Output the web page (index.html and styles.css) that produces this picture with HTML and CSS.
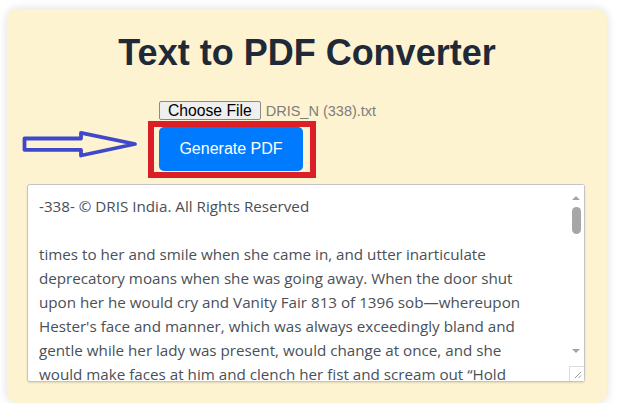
FILE: index.html
```html
<!DOCTYPE html>
<html lang="en">
<head>
<meta charset="utf-8">
<title>Text to PDF Converter</title>
<link rel="stylesheet" href="styles.css">
</head>
<body>
<div class="card">
  <h1 class="title">Text to PDF Converter</h1>
  <form class="form">
    <div class="file-row">
      <button type="button" class="file-btn">Choose File</button>
      <span class="file-name">DRIS_N (338).txt</span>
    </div>
    <button type="button" class="generate-btn">Generate PDF</button>
  </form>
  <div class="text-wrap">
    <textarea class="text-area" readonly>-338- © DRIS India. All Rights Reserved

times to her and smile when she came in, and utter inarticulate
deprecatory moans when she was going away. When the door shut
upon her he would cry and Vanity Fair 813 of 1396 sob—whereupon
Hester's face and manner, which was always exceedingly bland and
gentle while her lady was present, would change at once, and she
would make faces at him and clench her fist and scream out “Hold
your tongue,” at her.</textarea>
    <div class="scrollbar">
      <span class="sb-up"></span>
      <span class="sb-thumb"></span>
      <span class="sb-down"></span>
    </div>
    <div class="resizer">
      <svg width="15" height="15" viewBox="0 0 15 15"><path d="M12 6 L6 12 M12 9.5 L9.5 12" stroke="#9a9a9a" stroke-width="1" fill="none"/></svg>
    </div>
  </div>
  <div class="highlight-box"></div>
  <svg class="pointer-arrow" width="120" height="32" viewBox="0 0 120 32">
    <polygon points="2.5,8.5 59,8.5 59,2.8 113,14 59,25.5 59,19.8 2.5,19.8" fill="none" stroke="#3f48cc" stroke-width="3.8" stroke-linejoin="round"/>
  </svg>
</div>
</body>
</html>
```
FILE: styles.css
```css
* { box-sizing: border-box; }

body {
  margin: 0;
  background: #ffffff;
  font-family: "Liberation Sans", Arial, sans-serif;
}

.card {
  position: relative;
  width: 600px;
  height: 394px;
  margin: 9px 0 0 7px;
  padding: 22px 20px 21px;
  background: #fdf3d0;
  border-radius: 10px;
  box-shadow: 0 0 10px rgba(0, 0, 0, 0.14);
}

.title {
  margin: 0 0 27px;
  font-size: 36px;
  line-height: 43px;
  font-weight: 700;
  color: #1f2937;
  text-align: center;
}

.form {
  width: 296px;
  margin: 0 auto;
}

.file-row {
  display: flex;
  align-items: center;
  height: 19px;
}

.file-btn {
  height: 19px;
  padding: 0 8px;
  margin: 0;
  font-family: "Liberation Sans", Arial, sans-serif;
  font-size: 15.7px;
  line-height: 17px;
  color: #000;
  background: #efefef;
  border: 1px solid #8a8a8a;
  border-radius: 2px;
}

.file-name {
  margin-left: 5px;
  font-size: 14.5px;
  color: #7d7d7d;
}

.generate-btn {
  display: block;
  width: 144px;
  height: 44px;
  margin-top: 7px;
  padding: 0;
  font-family: "Liberation Sans", Arial, sans-serif;
  font-size: 16px;
  color: #ffffff;
  background: #007bff;
  border: none;
  border-radius: 5px;
}

.text-wrap {
  position: relative;
  margin-top: 13px;
  width: 558px;
  height: 198px;
}

.text-area {
  display: block;
  width: 100%;
  height: 100%;
  margin: 0;
  padding: 9px 12px 6px 11px;
  font-family: "Open Sans", "Noto Sans", sans-serif;
  font-size: 15.2px;
  line-height: 24px;
  color: #495057;
  background: #ffffff;
  border: 1px solid #c4c4c4;
  border-radius: 3px;
  box-shadow: 0 1px 2px rgba(0, 0, 0, 0.12);
  white-space: pre;
  overflow: hidden;
  resize: none;
  outline: none;
}

.scrollbar {
  position: absolute;
  top: 1px;
  right: 1px;
  bottom: 16px;
  width: 15px;
  background: #ffffff;
}

.sb-up, .sb-down {
  position: absolute;
  left: 3px;
  width: 0;
  height: 0;
  border-left: 4px solid transparent;
  border-right: 4px solid transparent;
}

.sb-up {
  top: 11px;
  border-bottom: 4px solid #a3a3a3;
}

.sb-down {
  bottom: 13px;
  border-top: 4px solid #a3a3a3;
}

.sb-thumb {
  position: absolute;
  top: 22px;
  left: 3px;
  width: 9px;
  height: 27px;
  border-radius: 5px;
  background: #a6a6a6;
}

.resizer {
  position: absolute;
  right: 1px;
  bottom: 1px;
  width: 15px;
  height: 15px;
  background: #ffffff;
  border-left: 1px solid #dcdcdc;
  border-top: 1px solid #dcdcdc;
}

.resizer svg { display: block; margin: -1px 0 0 -1px; }

.highlight-box {
  position: absolute;
  left: 141px;
  top: 112px;
  width: 168px;
  height: 57px;
  border: 6px solid #dc1f26;
  pointer-events: none;
}

.pointer-arrow {
  position: absolute;
  left: 15px;
  top: 121px;
}
```
